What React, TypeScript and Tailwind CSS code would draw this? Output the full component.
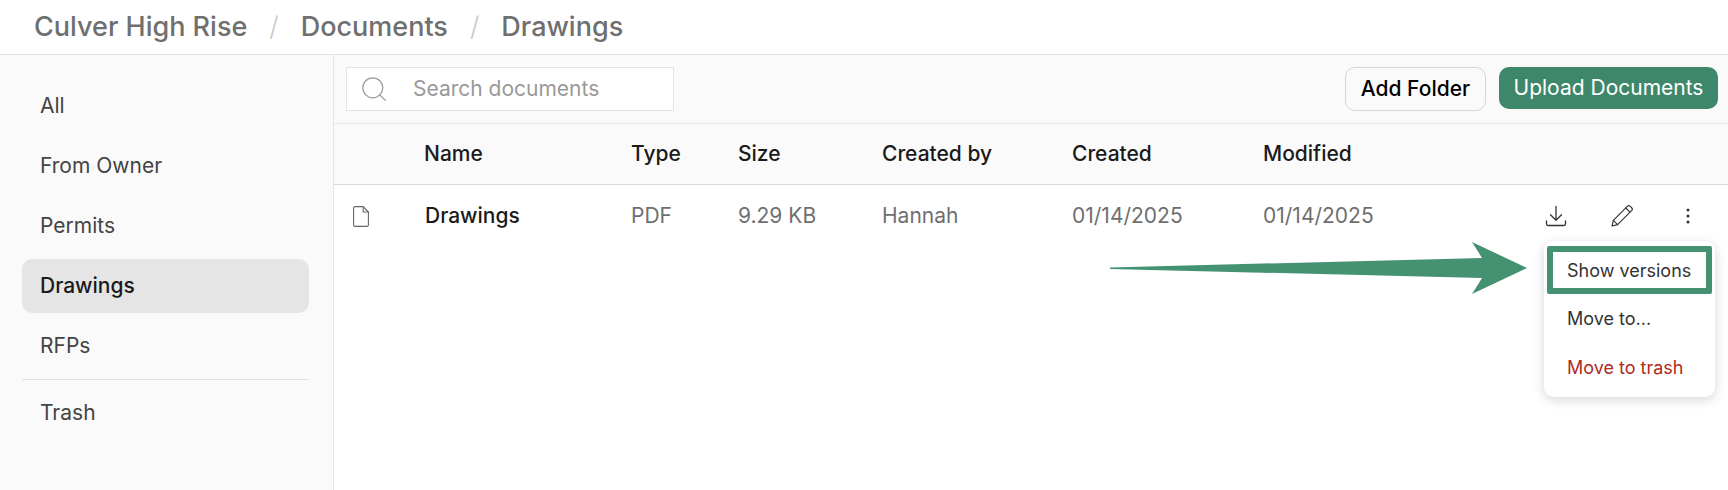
const folders = ["All", "From Owner", "Permits", "Drawings", "RFPs"];
const columns = ["Name", "Type", "Size", "Created by", "Created", "Modified"];
const gridCols = "grid grid-cols-[90px_207px_107px_144px_190px_191px_1fr]";

function SearchIcon() {
  return (
    <svg width="24" height="24" viewBox="0 0 24 24" fill="none" stroke="#9a9a9a" strokeWidth="1.2" strokeLinecap="round">
      <circle cx="10.8" cy="10.8" r="10" />
      <path d="M17.8 18l5.6 5.4" />
    </svg>
  );
}

function FileIcon() {
  return (
    <svg width="16" height="21" viewBox="0 0 16 21" fill="none" stroke="#666" strokeWidth="1.1" strokeLinejoin="round">
      <path d="M.6 2A1.4 1.4 0 0 1 2 .6h8.2l5.2 5.4V19a1.4 1.4 0 0 1-1.4 1.4H2A1.4 1.4 0 0 1 .6 19z" />
      <path d="M10.2.6V6h5.2" />
    </svg>
  );
}

function DownloadIcon() {
  return (
    <svg width="22" height="22" viewBox="0 0 22 22" fill="none" stroke="#333" strokeWidth="1.3" strokeLinecap="round" strokeLinejoin="round">
      <path d="M11 1.5v13.5M5.5 9.8l5.5 5.4 5.5-5.4" />
      <path d="M1.5 16v3a1.5 1.5 0 0 0 1.5 1.5h16a1.5 1.5 0 0 0 1.5-1.5v-3" />
    </svg>
  );
}

function PencilIcon() {
  return (
    <svg width="22" height="22" viewBox="0 0 22 22" fill="none" stroke="#333" strokeWidth="1.15" strokeLinecap="round" strokeLinejoin="round">
      <path d="M1 21l1.4-5.6L16.6 1.2a1.7 1.7 0 0 1 2.4 0l1.8 1.8a1.7 1.7 0 0 1 0 2.4L6.6 19.6z" />
      <path d="M14.8 3l4.2 4.2M2.4 15.4l4.2 4.2" />
    </svg>
  );
}

function DotsIcon() {
  return (
    <svg width="6" height="16" viewBox="0 0 6 16" fill="#333">
      <circle cx="3" cy="2" r="1.5" />
      <circle cx="3" cy="8" r="1.5" />
      <circle cx="3" cy="14" r="1.5" />
    </svg>
  );
}

function Slash() {
  return <span className="mx-[22px] text-[27px] font-light text-[#c9c9c9]">/</span>;
}

export default function App() {
  return (
    <div className="flex h-[490px] w-[1728px] flex-col overflow-hidden bg-white font-['Inter',sans-serif]">
      {/* Breadcrumb */}
      <header className="flex h-[55px] shrink-0 items-center border-b border-[#e3e3e3] pl-[34px] text-[27px] font-medium text-[#6f6f6f]">
        <span>Culver High Rise</span>
        <Slash />
        <span>Documents</span>
        <Slash />
        <span>Drawings</span>
      </header>

      <div className="flex min-h-0 flex-1">
        {/* Folder list */}
        <aside className="w-[334px] shrink-0 border-r border-[#e6e6e6] bg-[#fafafa] pl-[22px] pr-[24px] pt-[24px] text-[21px] text-[#444]">
          {folders.map((folder) => (
            <div
              key={folder}
              className={
                folder === "Drawings"
                  ? "mb-[6px] flex h-[54px] items-center rounded-[10px] bg-[#e5e5e5] pl-[18px] font-medium text-[#1a1a1a]"
                  : "mb-[6px] flex h-[54px] items-center pl-[18px]"
              }
            >
              {folder}
            </div>
          ))}
          <div className="border-t border-[#e3e3e3] pt-[6px]">
            <div className="flex h-[54px] items-center pl-[18px]">Trash</div>
          </div>
        </aside>

        <main className="relative min-w-0 flex-1">
          {/* Toolbar */}
          <div className="flex h-[69px] items-center justify-between border-b border-[#e6e6e6] bg-[#fafafa] pl-[12px] pr-[10px]">
            <div className="flex h-[44px] w-[328px] items-center border border-[#e3e3e3] bg-white pl-[15px]">
              <SearchIcon />
              <span className="ml-[27px] text-[21px] text-[#999]">Search documents</span>
            </div>
            <div className="flex h-[44px] items-start gap-[13px]">
              <button className="h-[44px] w-[141px] rounded-[10px] border border-[#d6d6d6] bg-[#fafafa] text-[21px] font-medium text-black">
                Add Folder
              </button>
              <button className="h-[42px] w-[219px] rounded-[10px] bg-[#3f876b] text-[21px] font-normal text-white">
                Upload Documents
              </button>
            </div>
          </div>

          {/* Table head */}
          <div className={`${gridCols} h-[61px] items-center border-b border-[#d9d9d9] bg-[#fafafa] text-[21px] font-medium text-[#1a1a1a]`}>
            <span />
            {columns.map((col) => (
              <span key={col}>{col}</span>
            ))}
          </div>

          {/* Row */}
          <div className={`${gridCols} h-[62px] items-center text-[21px] text-[#6f6f6f]`}>
            <span className="pl-[19px]">
              <FileIcon />
            </span>
            <span className="pl-px font-medium text-[#1a1a1a]">Drawings</span>
            <span>PDF</span>
            <span>9.29 KB</span>
            <span>Hannah</span>
            <span>01/14/2025</span>
            <span className="flex items-center justify-between pr-[37px]">
              <span>01/14/2025</span>
              <span className="flex items-center">
                <DownloadIcon />
                <span className="ml-[44px]">
                  <PencilIcon />
                </span>
                <span className="ml-[52px]">
                  <DotsIcon />
                </span>
              </span>
            </span>
          </div>

          {/* Row action menu */}
          <div className="absolute left-[1210px] top-[186px] w-[171px] rounded-[10px] bg-white px-[3px] py-[5px] text-[18px] text-[#333] shadow-[0_3px_12px_rgba(0,0,0,0.16)]">
            <div className="flex h-[48px] items-center rounded-[2px] border-[6px] border-[#459272] pl-[14px]">
              Show versions
            </div>
            <div className="flex h-[48px] items-center pl-[20px]">Move to...</div>
            <div className="flex h-[50px] items-center pl-[20px] text-[#b02a1e]">Move to trash</div>
          </div>

          {/* Callout arrow */}
          <svg className="absolute left-[776px] top-[186px]" width="420" height="56" viewBox="0 0 420 56">
            <path d="M0 26.5L372 17 362 1 417 27 362 53 372 37 0 28z" fill="#459272" />
          </svg>
        </main>
      </div>
    </div>
  );
}
